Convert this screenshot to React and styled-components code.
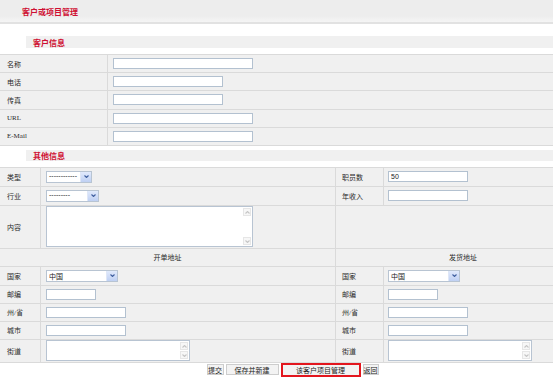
import React from 'react';
import styled, { createGlobalStyle } from 'styled-components';

const GlobalStyle = createGlobalStyle`
  html, body {
    margin: 0;
    padding: 0;
    background: #fff;
    overflow: hidden;
  }
  body {
    font-family: "Liberation Serif", "Noto Sans CJK SC", serif;
    font-size: 7px;
    color: #2a2a2a;
  }
`;

// the form is wider than the window; the right part is cut off as in the screenshot
const Viewport = styled.div`
  width: 100%;
  overflow: hidden;
`;

const Page = styled.div`
  width: 590px;
`;

const TitleBar = styled.div`
  height: 22px;
  background: linear-gradient(#ededed 0, #ededed 16px, #f5f5f5 22px);
  border-bottom: 2px solid #e2e2e2;
  display: flex;
  align-items: center;
  padding-left: 22px;
`;

const RedTitle = styled.h1`
  margin: 0;
  font-family: "Noto Sans CJK SC", sans-serif;
  font-size: 8px;
  font-weight: bold;
  color: #cf0f32;
`;

const SectionHead = styled.div`
  height: ${({ $h }) => $h}px;
  margin: ${({ $top }) => $top}px 0 ${({ $bottom }) => $bottom}px 26px;
  padding-left: 7px;
  background: #f0f0f0;
  display: flex;
  align-items: center;
  font-family: "Noto Sans CJK SC", sans-serif;
  font-size: 8px;
  font-weight: bold;
  color: #cf0f32;
`;

const FormGrid = styled.div`
  display: grid;
  grid-template-columns: ${({ $cols }) => $cols};
  grid-template-rows: ${({ $rows }) => $rows};
  gap: 1px;
  padding: 1px 0;
  background: #dadada;
`;

const Label = styled.div`
  background: #f0f0f0;
  display: flex;
  align-items: center;
  padding-left: ${({ $pad }) => $pad ?? 7}px;
  white-space: nowrap;
`;

const Field = styled.div`
  background: #f0f0f0;
  display: flex;
  align-items: center;
  justify-content: ${({ $center }) => ($center ? 'center' : 'flex-start')};
  padding-left: ${({ $center, $pad }) => ($center ? 0 : $pad ?? 5)}px;
  grid-column: span ${({ $span }) => $span || 1};
`;

const TextInput = styled.input`
  box-sizing: border-box;
  width: ${({ $w }) => $w}px;
  height: 11px;
  margin: 0;
  padding: 0 2px;
  border: 1px solid #b3c1d0;
  background: #fff;
  font: 7px "Liberation Sans", "Noto Sans CJK SC", sans-serif;
  color: #222;
  outline: none;
`;

const SelectBox = styled.div`
  box-sizing: border-box;
  width: ${({ $w }) => $w}px;
  height: 12px;
  display: flex;
  border: 1px solid #b8c4d2;
  background: #fff;
`;

const SelectText = styled.span`
  flex: 1;
  padding-left: 2px;
  line-height: 10px;
  font: 7px "Liberation Sans", "Noto Sans CJK SC", sans-serif;
  color: #222;
  overflow: hidden;
  white-space: nowrap;
`;

const SelectArrow = styled.span`
  width: 10px;
  background: linear-gradient(#e1eafc, #bfd0f3);
  border-left: 1px solid #dfe7f7;
  display: flex;
  align-items: center;
  justify-content: center;
`;

const AreaBox = styled.div`
  box-sizing: border-box;
  width: ${({ $w }) => $w}px;
  height: ${({ $h }) => $h}px;
  border: 1px solid #b8c4d2;
  background: #fff;
  display: flex;
  justify-content: flex-end;
`;

const ScrollTrack = styled.div`
  width: 9px;
  display: flex;
  flex-direction: column;
  justify-content: space-between;
  padding: 1px 0;
`;

const ScrollBtn = styled.div`
  box-sizing: border-box;
  width: 8px;
  height: 8px;
  border: 1px solid #e6e6e6;
  background: #f7f7f7;
  display: flex;
  align-items: center;
  justify-content: center;
`;

const ButtonRow = styled.div`
  display: flex;
  justify-content: center;
  align-items: center;
  gap: 2px;
  height: 14px;
  padding-right: 5px;
`;

const Button = styled.button`
  box-sizing: border-box;
  width: ${({ $w }) => $w}px;
  height: ${({ $hl }) => ($hl ? 14 : 11)}px;
  margin: 0;
  padding: 0;
  border: ${({ $hl }) => ($hl ? '2px solid #e3161e' : '1px solid #cdcdcd')};
  background: #f3f3f3;
  font: 7px "Noto Sans CJK SC", sans-serif;
  color: #222;
  display: flex;
  align-items: center;
  justify-content: center;
`;

const Chevron = ({ up, color }) => (
  <svg width="5" height="3" viewBox="0 0 5 3">
    <path
      d={up ? 'M0.5 2.5 L2.5 0.5 L4.5 2.5' : 'M0.5 0.5 L2.5 2.5 L4.5 0.5'}
      fill="none"
      stroke={color}
      strokeWidth="1.1"
    />
  </svg>
);

const Select = ({ w, value }) => (
  <SelectBox $w={w}>
    <SelectText>{value}</SelectText>
    <SelectArrow>
      <Chevron color="#3f5f9f" />
    </SelectArrow>
  </SelectBox>
);

const TextArea = ({ w, h }) => (
  <AreaBox $w={w} $h={h}>
    <ScrollTrack>
      <ScrollBtn>
        <Chevron up color="#c6c6c6" />
      </ScrollBtn>
      <ScrollBtn>
        <Chevron color="#c6c6c6" />
      </ScrollBtn>
    </ScrollTrack>
  </AreaBox>
);

const contactRows = [
  { label: '名称', w: 140 },
  { label: '电话', w: 110 },
  { label: '传真', w: 110 },
  { label: 'URL', w: 140 },
  { label: 'E-Mail', w: 140 },
];

const addressRows = [
  { label: '国家', kind: 'select', w: 72 },
  { label: '邮编', kind: 'input', w: 50 },
  { label: '州/省', kind: 'input', w: 80 },
  { label: '城市', kind: 'input', w: 80 },
  { label: '街道', kind: 'area', w: 144 },
];

const AddressControl = ({ kind, w }) => {
  if (kind === 'select') return <Select w={w} value="中国" />;
  if (kind === 'area') return <TextArea w={w} h={21} />;
  return <TextInput $w={w} />;
};

const App = () => {
  return (
    <Viewport>
      <GlobalStyle />
      <Page>
        <TitleBar>
          <RedTitle>客户或项目管理</RedTitle>
        </TitleBar>

        <SectionHead $h={12} $top={12} $bottom={6}>
          客户信息
        </SectionHead>
        <FormGrid $cols="107px 1fr" $rows="repeat(5, 17.2px)">
          {contactRows.map((row) => (
            <React.Fragment key={row.label}>
              <Label>{row.label}</Label>
              <Field>
                <TextInput $w={row.w} />
              </Field>
            </React.Fragment>
          ))}
        </FormGrid>

        <SectionHead $h={11} $top={4} $bottom={6}>
          其他信息
        </SectionHead>
        <FormGrid
          $cols="40px 294px 47px 1fr"
          $rows="18px 18px 42px 17px 18px 17px 17px 17px 22px"
        >
          <Label>类型</Label>
          <Field>
            <Select w={46} value="------------" />
          </Field>
          <Label $pad={6}>职员数</Label>
          <Field $pad={4}>
            <TextInput $w={80} defaultValue="50" />
          </Field>

          <Label>行业</Label>
          <Field>
            <Select w={53} value="---------" />
          </Field>
          <Label $pad={6}>年收入</Label>
          <Field $pad={4}>
            <TextInput $w={80} />
          </Field>

          <Label>内容</Label>
          <Field>
            <TextArea w={207} h={41} />
          </Field>
          <Field $span={2} />

          <Field $span={2} $center>
            开单地址
          </Field>
          <Field $span={2} $center>
            发货地址
          </Field>

          {addressRows.map((row) => (
            <React.Fragment key={row.label}>
              <Label>{row.label}</Label>
              <Field>
                <AddressControl kind={row.kind} w={row.w} />
              </Field>
              <Label $pad={6}>{row.label}</Label>
              <Field $pad={4}>
                <AddressControl kind={row.kind} w={row.w} />
              </Field>
            </React.Fragment>
          ))}
        </FormGrid>

        <ButtonRow>
          <Button $w={17}>提交</Button>
          <Button $w={53}>保存并新建</Button>
          <Button $w={80} $hl>
            该客户项目管理
          </Button>
          <Button $w={16}>返回</Button>
        </ButtonRow>
      </Page>
    </Viewport>
  );
};

export default App;
